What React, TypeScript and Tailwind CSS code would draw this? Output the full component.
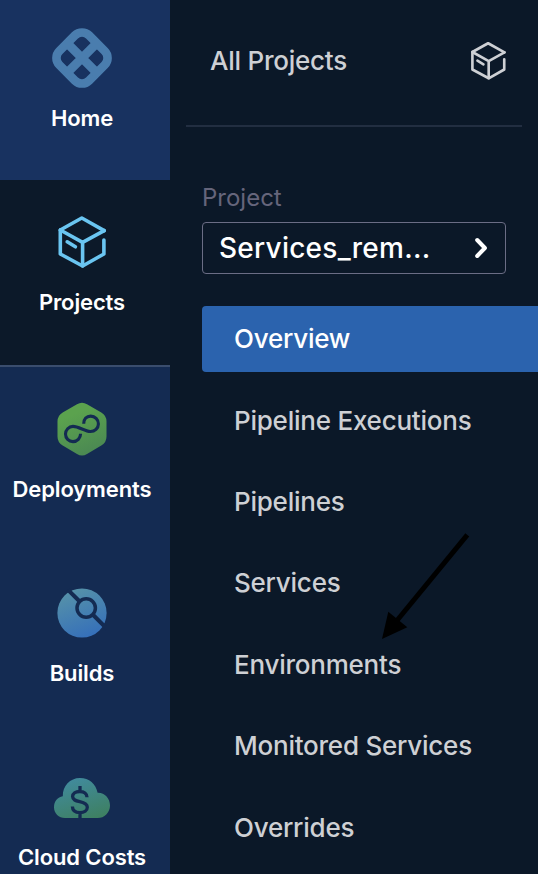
import React from "react";

function HomeLogo() {
  return (
    <svg width="60" height="60" viewBox="-30 -30 60 60" fill="none" stroke="#4a7dae">
      <g transform="rotate(45)">
        <rect x="-21" y="-21" width="42" height="42" rx="10" strokeWidth="8.6" />
        <path d="M-20 0H20M0 -20V20" strokeWidth="8.9" />
      </g>
    </svg>
  );
}

function Cube({ className }: { className: string }) {
  return (
    <svg
      className={className}
      viewBox="57 215 50 54"
      fill="none"
      stroke="currentColor"
      strokeWidth="3.6"
      strokeLinecap="round"
      strokeLinejoin="round"
    >
      <path d="M104.2 230.6 81.8 218 60.3 230V254L82.6 266 103.9 254V240" />
      <path d="M60.3 230 82.6 242.4 104.2 230.6M82.6 242.4V266" />
      <path d="M67.2 241.8 75.4 246.8" />
    </svg>
  );
}

function DeployIcon() {
  return (
    <svg width="50" height="54" viewBox="57 402 50 54" fill="none">
      <defs>
        <linearGradient id="deploy" x1="0.3" y1="0" x2="0.7" y2="1">
          <stop offset="0.2" stopColor="#5ba24e" />
          <stop offset="1" stopColor="#4a8753" />
        </linearGradient>
      </defs>
      <path
        d="M77 404.2Q82 401.2 87 404.2L101.3 412.5Q106.5 415.5 106.5 421.5V436.5Q106.5 442.5 101.3 445.5L87 453.9Q82 456.9 77 453.9L62.7 445.5Q57.5 442.5 57.5 436.5V421.5Q57.5 415.5 62.7 412.5Z"
        fill="url(#deploy)"
      />
      <path
        d="M83.7 423.8C83.7 419 86.6 416.1 90.7 416.1C95 416.1 98.4 419.6 98.4 424C98.4 428.3 94.8 431.6 90.3 431.5C85 431.4 78.6 426.4 73 426.4C68.7 426.4 65.5 430 65.5 434.1C65.5 438.3 68.7 441.6 73 441.6C77.3 441.6 80.5 438.3 80.6 433.8"
        stroke="#142b52"
        strokeWidth="3.1"
      />
    </svg>
  );
}

function BuildIcon() {
  return (
    <svg width="50" height="50" viewBox="57 588 50 50" fill="none">
      <defs>
        <linearGradient id="build" x1="0.25" y1="0" x2="0.65" y2="1">
          <stop offset="0" stopColor="#5793a8" />
          <stop offset="1" stopColor="#356fba" />
        </linearGradient>
      </defs>
      <circle cx="82" cy="613" r="24.6" fill="url(#build)" />
      <circle cx="86.2" cy="608" r="9.2" stroke="#142b52" strokeWidth="3.5" />
      <path d="M68 589.8 79.7 601.5M92.7 614.5 107 628.8" stroke="#142b52" strokeWidth="4" />
    </svg>
  );
}

function CloudIcon() {
  return (
    <svg width="56" height="40" viewBox="54 778 56 40" fill="none">
      <defs>
        <linearGradient id="cloud" x1="0.3" y1="0" x2="0.75" y2="1">
          <stop offset="0" stopColor="#418b9e" />
          <stop offset="1" stopColor="#3e8062" />
        </linearGradient>
      </defs>
      <path
        d="M65 818C58.8 818 54 813.3 54 807.2C54 801.2 57.8 797 62.8 796.3C62.6 786 70 778 80 778C89 778 96 784 97.6 792.8C104.7 792.5 110 798.5 110 805.4C110 812.5 104.3 818 97.6 818Z"
        fill="url(#cloud)"
      />
      <path
        d="M87 797.2C86.9 793.7 84.1 791.5 79.8 791.5C75.5 791.5 72.6 793.6 72.6 796.6C72.6 799.8 75.6 800.7 79.7 801.7C84.1 802.7 87.3 804 87.3 807.2C87.3 810.5 84.2 812.6 79.9 812.6C75.2 812.6 72.5 810.3 72.4 806.5M80 786V791.5M80 812V818"
        stroke="#142b52"
        strokeWidth="3.3"
      />
    </svg>
  );
}

const navItems = [
  "Pipeline Executions",
  "Pipelines",
  "Services",
  "Environments",
  "Monitored Services",
  "Overrides",
];

const label = "text-[22px] leading-[28px] font-semibold whitespace-nowrap text-white tracking-[-0.12px]";

function Sidebar() {
  return (
    <aside className="flex h-full w-[170px] shrink-0 flex-col bg-[#142b52]">
      <div className="flex h-[180px] shrink-0 flex-col items-center bg-[#183260] pt-7 pr-1.5">
        <HomeLogo />
        <span className={`${label} mt-4`}>Home</span>
      </div>
      <div className="flex h-[187px] shrink-0 flex-col items-center border-b-2 border-[#3a4d6d] bg-[#0c1929] pt-[35px] pr-1.5">
        <Cube className="h-[54px] w-[50px] text-[#6ac5f1]" />
        <span className={`${label} mt-[19px]`}>Projects</span>
      </div>
      <div className="flex h-[184px] shrink-0 flex-col items-center pt-[35px] pr-1.5">
        <DeployIcon />
        <span className={`${label} mt-[19px]`}>Deployments</span>
      </div>
      <div className="flex h-[184px] shrink-0 flex-col items-center pt-[37px] pr-1.5">
        <BuildIcon />
        <span className={`${label} mt-[21px]`}>Builds</span>
      </div>
      <div className="flex shrink-0 flex-col items-center pt-[43px] pr-1.5">
        <CloudIcon />
        <span className={`${label} mt-[25px]`}>Cloud Costs</span>
      </div>
    </aside>
  );
}

export default function App() {
  return (
    <div className="relative flex h-[874px] w-[538px] overflow-hidden bg-[#0b1828] font-['Inter','Liberation_Sans',sans-serif]">
      <Sidebar />
      <main className="flex min-w-0 flex-1 flex-col">
        <header className="mr-4 ml-4 flex h-[127px] shrink-0 items-start justify-between border-b-2 border-[#222e41] pt-[41px] pr-[16px] pl-6 text-[#ced0d4]">
          <span className="text-[26px] leading-[40px] font-[450] tracking-[-0.24px]">All Projects</span>
          <Cube className="h-[39.5px] w-[36.5px]" />
        </header>
        <section className="mt-[53px] mr-8 ml-8 flex flex-col">
          <span className="text-[24px] leading-[36px] text-[#65657b]">Project</span>
          <button className="mt-[6px] flex h-[52px] items-center justify-between rounded border border-[#6b6d85] pr-[16px] pl-4 text-left text-white">
            <span className="text-[28px] leading-[36px] font-[450] tracking-[0.25px]">Services_rem...</span>
            <svg width="14" height="22" viewBox="0 0 14 22" fill="none" stroke="currentColor" strokeWidth="4" strokeLinecap="round" strokeLinejoin="round">
              <path d="M2.2 3 9.9 11 2.2 19" />
            </svg>
          </button>
        </section>
        <nav className="mt-8 ml-8 flex flex-col gap-[15.4px] text-[26px] font-[450] tracking-[-0.23px] text-[#ced0d4]">
          <a className="flex h-[66px] items-center rounded-l bg-[#2b63ae] pb-[2px] pl-8 text-white">Overview</a>
          {navItems.map((item) => (
            <a key={item} className="flex h-[66px] items-center pb-[0.4px] pl-8 whitespace-nowrap">
              {item}
            </a>
          ))}
        </nav>
      </main>
      <svg className="absolute top-[530px] left-[378px]" width="94" height="112" viewBox="378 530 94 112">
        <path d="M467.3 534.8 397 620.5" stroke="#000" strokeWidth="5" />
        <path d="M382 639 388.3 611.7 407.3 627.3Z" fill="#000" />
      </svg>
    </div>
  );
}
